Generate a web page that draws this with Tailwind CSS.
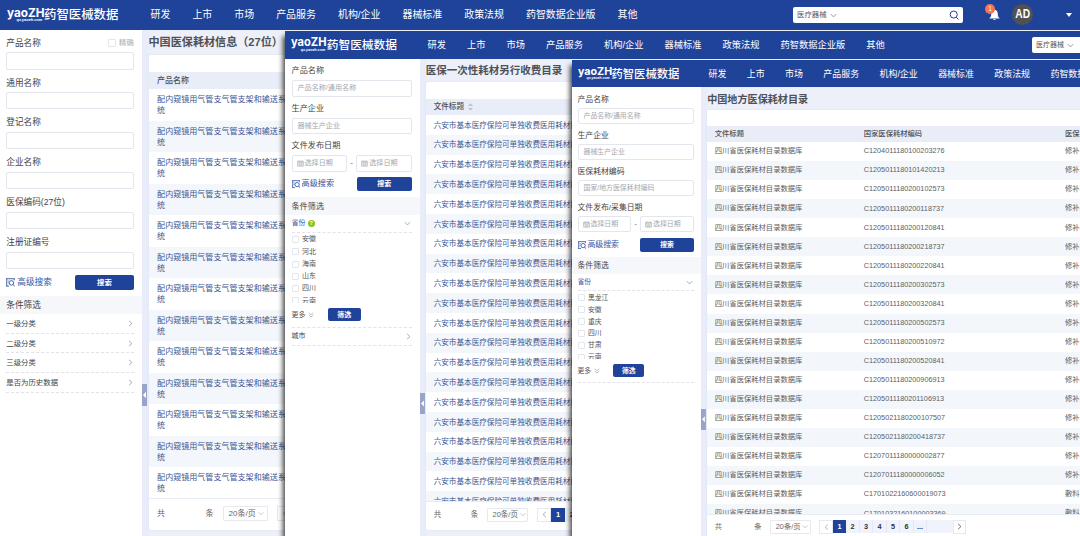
<!DOCTYPE html>
<html lang="zh-CN">
<head>
    <meta charset="UTF-8">
    <meta name="viewport" content="width=device-width, initial-scale=1.0">
    <title>药智医械数据</title>
    <script src="https://cdn.jsdelivr.net/npm/@tailwindcss/browser@4"></script>
</head>
<body class="relative w-[1080px] h-[536px] overflow-hidden bg-[#e9edf9] font-['Liberation_Sans','Noto_Sans_CJK_SC',sans-serif] text-[#4d5158] whitespace-nowrap">

    <svg class="hidden">
        <symbol id="adv" viewBox="0 0 10 10" fill="none" stroke="currentColor">
            <path d="M0 .8H9.8M.8 1V9M0 9H3.5M2 3.3H3M2 5.5H2.8M9.2 1V2.6"/><circle cx="6" cy="5.4" r="2.5"/><path d="M7.8 7.2L9.8 9.5"/>
        </symbol>
        <symbol id="right" viewBox="0 0 6 8" fill="none" stroke="currentColor"><path d="M1.3 .8L4.7 4L1.3 7.2"/></symbol>
        <symbol id="left" viewBox="0 0 6 8" fill="none" stroke="currentColor"><path d="M4.7 .8L1.3 4L4.7 7.2"/></symbol>
        <symbol id="down" viewBox="0 0 8 6" fill="none" stroke="currentColor"><path d="M.8 1.3L4 4.7L7.2 1.3"/></symbol>
        <symbol id="more" viewBox="0 0 8 8" fill="none" stroke="currentColor"><path d="M1 1L4 3.6L7 1M1 4L4 6.6L7 4"/></symbol>
        <symbol id="cal" viewBox="0 0 8 8" fill="none" stroke="currentColor" stroke-width=".8"><path d="M.8 1.5H7.2V7H.8ZM.8 3.2H7.2M2.4 .5V2M5.6 .5V2M2 4.6H6M2 5.8H6"/></symbol>
        <symbol id="handle" viewBox="0 0 5 22"><path d="M4 7.8V14.2L1 11Z" fill="#fff"/></symbol>
    </svg>

    <!-- Window 1 -->
    <section class="absolute left-0 top-0 w-[1080px] h-[536px] flex flex-col overflow-hidden">
        <header class="h-[29.5px] shrink-0 bg-[#1f4399] text-white flex items-center pl-[6.5px]">
            <div class="w-[37.5px] h-full shrink-0 pt-[6.5px]">
                <b class="block text-[12px] leading-[11px] origin-left scale-x-[.98] font-[Inter]">yaoZH</b>
                <i class="block ml-[10px] text-[3.9px] leading-[4px] font-bold">qx.yaozh.com</i>
            </div>
            <b class="w-[106.5px] shrink-0 pt-[1px] text-[12.4px] font-medium">药智医械数据</b>
            <nav class="flex gap-[22px] pt-[1.5px] text-[9.95px] w-[642.5px] shrink-0">
                <a>研发</a><a>上市</a><a>市场</a><a>产品服务</a><a>机构/企业</a><a>器械标准</a><a>政策法规</a><a>药智数据企业版</a><a>其他</a>
            </nav>
            <div class="w-[170px] h-4 shrink-0 bg-white rounded-[2px] flex items-center px-1 pt-[.5px] text-[7.4px] text-[#555]">
                医疗器械<svg class="w-[7px] h-[5px] ml-[3px] text-[#888]"><use href="#down"/></svg>
                <svg class="w-[10px] h-[10px] ml-auto" viewBox="0 0 11 11" fill="none" stroke="#1f4399" stroke-width="1.1"><circle cx="5.2" cy="5" r="3.9"/><path d="M8 8L10.4 10.4"/></svg>
            </div>
            <div class="relative w-[11px] h-[12px] ml-[26px] mt-[1px] shrink-0">
                <svg class="w-[11px] h-[12px]" viewBox="0 0 11 12" fill="#fff"><path d="M5.5 .5C8 1 8.8 3 8.8 5.5C8.8 7.4 9.5 8.3 10.5 9V9.6H.5V9C1.5 8.3 2.2 7.4 2.2 5.5C2.2 3 3 1 5.5 .5ZM4 10.2H7Q5.5 12 4 10.2Z"/></svg>
                <span class="absolute left-[-4px] top-[-5px] size-[10px] rounded-full bg-[#f7744c] text-[6.5px] leading-[10px] text-center">1</span>
            </div>
            <div class="size-[21px] ml-[12px] mt-[-1px] shrink-0 rounded-full bg-[#505153] flex items-center justify-center"><b class="text-[12px] scale-x-[.85]">AD</b></div>
            <svg class="w-[6px] h-[4px] ml-[33px]" viewBox="0 0 6 4"><path d="M0 0H6L3 4Z" fill="#fff"/></svg>
        </header>
        <div class="flex flex-1 min-h-0">
            <aside class="w-[142px] shrink-0 bg-white pt-[3.2px]">
                <form class="pl-[6.3px] w-[133.7px] text-[8.65px] text-[#444]">
                    <div class="h-[39.85px]">
                        <label class="flex h-[19.6px] pt-[1.5px] items-center">产品名称<span class="ml-auto flex items-center gap-[3.5px] text-[7.3px] font-medium text-[#b6b9bf]"><i class="size-[8px] border border-[#e3e6ec] rounded-[1px]"></i>精确</span></label>
                        <div class="h-[17.3px] border border-[#e3e6ec] rounded-[2px]"></div>
                    </div>
                    <div class="h-[39.85px]"><label class="flex h-[19.6px] pt-[1.5px] items-center">通用名称</label><div class="h-[17.3px] border border-[#e3e6ec] rounded-[2px]"></div></div>
                    <div class="h-[39.85px]"><label class="flex h-[19.6px] pt-[1.5px] items-center">登记名称</label><div class="h-[17.3px] border border-[#e3e6ec] rounded-[2px]"></div></div>
                    <div class="h-[39.85px]"><label class="flex h-[19.6px] pt-[1.5px] items-center">企业名称</label><div class="h-[17.3px] border border-[#e3e6ec] rounded-[2px]"></div></div>
                    <div class="h-[39.85px]"><label class="flex h-[19.6px] pt-[1.5px] items-center">医保编码(27位)</label><div class="h-[17.3px] border border-[#e3e6ec] rounded-[2px]"></div></div>
                    <div class="h-[39.85px]"><label class="flex h-[19.6px] pt-[1.5px] items-center">注册证编号</label><div class="h-[17.3px] border border-[#e3e6ec] rounded-[2px]"></div></div>
                    <div class="h-[21px] flex items-center text-[#34559f]">
                        <svg class="size-[9px] mr-[2px]"><use href="#adv"/></svg>高级搜索
                        <button class="ml-auto w-[58.5px] h-[14.5px] rounded-[2px] bg-[#1f4399] text-white text-[7.4px] font-bold">搜索</button>
                    </div>
                </form>
                <h3 class="mt-[3.2px] h-[18.3px] pt-[1px] flex items-center pl-[6.3px] bg-[#f5f7fb] text-[8.65px] text-[#444]">条件筛选</h3>
                <ul class="ml-[6.3px] w-[127.4px] text-[7.4px] text-[#444]">
                    <li class="h-[19.6px] flex items-center justify-between pr-[1px] border-b border-dashed border-[#e1e3e8]">一级分类<svg class="w-[5px] h-[7px] text-[#999]"><use href="#right"/></svg></li>
                    <li class="h-[19.6px] flex items-center justify-between pr-[1px] border-b border-dashed border-[#e1e3e8]">二级分类<svg class="w-[5px] h-[7px] text-[#999]"><use href="#right"/></svg></li>
                    <li class="h-[19.6px] flex items-center justify-between pr-[1px] border-b border-dashed border-[#e1e3e8]">三级分类<svg class="w-[5px] h-[7px] text-[#999]"><use href="#right"/></svg></li>
                    <li class="h-[19.6px] flex items-center justify-between pr-[1px] border-b border-dashed border-[#e1e3e8]">是否为历史数据<svg class="w-[5px] h-[7px] text-[#999]"><use href="#right"/></svg></li>
                </ul>
            </aside>
            <div class="w-[6.5px] shrink-0 pt-[354.5px]"><svg class="w-[5px] h-[22px] bg-[#98a5c9]"><use href="#handle"/></svg></div>
            <main class="flex-1 min-w-0 bg-[#edf0f9]">
                <h2 class="h-[25.5px] pt-[1px] flex items-center text-[11.1px] font-bold">中国医保耗材信息（27位）</h2>
                <div class="h-[475px] bg-white rounded-[2px] pt-[17px] flex flex-col shadow-[0_0_2px_#d5dcf3]">
                    <div class="h-[17px] shrink-0 bg-[#e9edf7] flex items-center pl-[8.6px] text-[8px] font-medium">产品名称</div>
                    <div id="list1" class="h-[410px] shrink-0 overflow-hidden border-b border-[#e8ebf2] text-[8.05px] leading-[11.2px] text-[#3d5590]"></div>
                    <div class="h-[29px] flex items-center pl-[8.6px] text-[8px] text-[#666]">
                        <span class="w-[48.5px]">共</span><span class="w-[17px]">条</span>
                        <span class="w-[45px] h-[15px] border border-[#e6e9f0] rounded-[1px] flex items-center pl-[5px]">20条/页<svg class="w-[6px] h-[5px] ml-[2px] text-[#bbb]"><use href="#down"/></svg></span>
                        <span class="w-[15px] h-[15px] ml-[9px] border border-[#e6e9f0] flex items-center justify-center"><svg class="w-[5px] h-[7px] text-[#999]"><use href="#left"/></svg></span>
                    </div>
                </div>
            </main>
        </div>
    </section>

    <!-- Window 2 -->
    <section class="absolute left-[285px] top-[31px] w-[795px] h-[505px] flex flex-col overflow-hidden bg-[#e9edf9] shadow-[-2px_5px_5px_rgba(0,0,0,.75)]">
        <header class="h-[28px] shrink-0 bg-[#1f4399] text-white flex items-center pl-[6.3px]">
            <div class="w-[35.5px] h-full shrink-0 pt-[6px]">
                <b class="block text-[11.3px] leading-[10.5px] origin-left scale-x-[.98] font-[Inter]">yaoZH</b>
                <i class="block ml-[9.5px] text-[3.7px] leading-[4px] font-bold">qx.yaozh.com</i>
            </div>
            <b class="w-[100.7px] shrink-0 text-[11.7px] font-medium">药智医械数据</b>
            <nav class="flex gap-[21px] pt-[1px] text-[9.25px] w-[605px] shrink-0">
                <a>研发</a><a>上市</a><a>市场</a><a>产品服务</a><a>机构/企业</a><a>器械标准</a><a>政策法规</a><a>药智数据企业版</a><a>其他</a>
            </nav>
            <div class="w-[160px] h-[15.5px] shrink-0 bg-white rounded-[2px] flex items-center pl-[3.5px] text-[7px] text-[#555]">
                医疗器械<svg class="w-[7px] h-[5px] ml-[3px] text-[#888]"><use href="#down"/></svg>
            </div>
        </header>
        <div class="flex flex-1 min-h-0">
            <aside class="w-[134.5px] shrink-0 bg-white pt-[2.7px]">
                <form class="pl-[6.5px] w-[126.8px] text-[8.15px] text-[#444]">
                    <div class="h-[37.4px]"><label class="flex h-[18.6px] pt-[1px] items-center">产品名称</label><div class="h-[16.4px] border border-[#e3e6ec] rounded-[2px] flex items-center pl-[5px] text-[7.1px] text-[#a5a8ae]">产品名称/通用名称</div></div>
                    <div class="h-[37.4px]"><label class="flex h-[18.6px] pt-[1px] items-center">生产企业</label><div class="h-[16.4px] border border-[#e3e6ec] rounded-[2px] flex items-center pl-[5px] text-[7.1px] text-[#a5a8ae]">器械生产企业</div></div>
                    <div class="h-[37.4px]">
                        <label class="flex h-[18.6px] pt-[1px] items-center">文件发布日期</label>
                        <div class="flex justify-between items-center text-[7.1px] text-[#a5a8ae]">
                            <span class="w-[55.5px] h-[16.6px] border border-[#e3e6ec] rounded-[2px] flex items-center pl-[4px]"><svg class="size-[7px] mr-[1px]"><use href="#cal"/></svg>选择日期</span>
                            <span class="text-[#555]">-</span>
                            <span class="w-[55.5px] h-[16.6px] border border-[#e3e6ec] rounded-[2px] flex items-center pl-[4px]"><svg class="size-[7px] mr-[1px]"><use href="#cal"/></svg>选择日期</span>
                        </div>
                    </div>
                    <div class="h-[20.8px] flex items-center text-[#34559f]">
                        <svg class="size-[8.5px] mr-[1.5px]"><use href="#adv"/></svg>高级搜索
                        <button class="ml-auto w-[55.3px] h-[14px] rounded-[2px] bg-[#1f4399] text-white text-[7px] font-bold">搜索</button>
                    </div>
                </form>
                <h3 class="mt-[2.8px] h-[17.5px] pt-[1px] flex items-center pl-[6.5px] bg-[#f5f7fb] text-[8.15px] text-[#444]">条件筛选</h3>
                <div class="ml-[6.5px] w-[120.3px] text-[7px] text-[#555]">
                    <div class="h-[17.6px] flex items-center border-b border-dashed border-[#e1e3e8] text-[#34559f]">省份<i class="ml-[2.5px] size-[6.5px] rounded-full bg-[#8bc21f] text-white text-[5px] leading-[6.5px] text-center not-italic font-bold">?</i><svg class="ml-auto mr-[1px] w-[7px] h-[5px] text-[#8a9cc8]"><use href="#down"/></svg></div>
                    <div class="h-[70.6px] pt-[1px] overflow-hidden" data-checks="安徽,河北,海南,山东,四川,云南" data-step="12.25"></div>
                    <div class="h-[24.6px] flex items-center border-b border-dashed border-[#e1e3e8]">更多<svg class="size-[6px] ml-[2.5px] text-[#aaa]"><use href="#more"/></svg><button class="ml-[14px] w-[32.5px] h-[13px] rounded-[2px] bg-[#1f4399] text-white text-[7px] font-bold">筛选</button></div>
                    <div class="h-[18.3px] flex items-center justify-between pr-[1px] border-b border-dashed border-[#e1e3e8] text-[#444]">城市<svg class="w-[5px] h-[7px] text-[#999]"><use href="#right"/></svg></div>
                </div>
            </aside>
            <div class="w-[6.2px] shrink-0 pt-[334px]"><svg class="w-[5px] h-[21px] bg-[#98a5c9]"><use href="#handle"/></svg></div>
            <main class="flex-1 min-w-0 bg-[#edf0f9]">
                <h2 class="h-[23.2px] pt-[1px] flex items-center text-[10.5px] font-bold">医保一次性耗材另行收费目录</h2>
                <div class="h-[448px] bg-white rounded-[2px] pt-[16.5px] flex flex-col shadow-[0_0_2px_#d5dcf3]">
                    <div class="h-[16.3px] shrink-0 bg-[#e9edf7] flex items-center pl-[8px] text-[7.6px] font-medium">文件标题<svg class="w-[5px] h-[8px] ml-[4px]" viewBox="0 0 5 8" fill="#bcc2cf"><path d="M0 3L2.5 .3L5 3ZM0 5L2.5 7.7L5 5Z"/></svg></div>
                    <div id="list2" class="h-[387px] shrink-0 overflow-hidden border-b border-[#e8ebf2] text-[7.6px] text-[#3d5590]"></div>
                    <div class="h-[26px] flex items-center pl-[8px] text-[7.5px] text-[#666]">
                        <span class="w-[37px]">共</span><span class="w-[16.3px]">条</span>
                        <span class="w-[41.5px] h-[14px] border border-[#e6e9f0] rounded-[1px] flex items-center pl-[4.5px]">20条/页<svg class="w-[6px] h-[5px] ml-[2px] text-[#bbb]"><use href="#down"/></svg></span>
                        <span class="w-[14px] h-[14px] ml-[9px] border border-[#e6e9f0] flex items-center justify-center"><svg class="w-[5px] h-[7px] text-[#999]"><use href="#left"/></svg></span>
                        <b class="w-[13.3px] h-[13.3px] leading-[13.3px] text-center bg-[#1f4399] text-white">1</b>
                        <b class="w-[14px] h-[13.3px] leading-[13.3px] text-center bg-[#f0f3fb] text-[#333]">2</b>
                    </div>
                </div>
            </main>
        </div>
    </section>

    <!-- Window 3 -->
    <section class="absolute left-[572px] top-[60.3px] w-[508px] h-[476px] flex flex-col overflow-hidden bg-[#e9edf9] shadow-[-2px_5px_5px_rgba(0,0,0,.75)]">
        <header class="h-[27.2px] shrink-0 bg-[#1f4399] text-white flex items-center pl-[5.5px]">
            <div class="w-[34px] h-full shrink-0 pt-[5.7px]">
                <b class="block text-[10.9px] leading-[10.5px] origin-left scale-x-[.98] font-[Inter]">yaoZH</b>
                <i class="block ml-[9px] text-[3.5px] leading-[4px] font-bold">qx.yaozh.com</i>
            </div>
            <b class="w-[97px] shrink-0 pt-[1px] text-[11.3px] font-medium">药智医械数据</b>
            <nav class="flex gap-[20.4px] pt-[1px] text-[8.95px] shrink-0">
                <a>研发</a><a>上市</a><a>市场</a><a>产品服务</a><a>机构/企业</a><a>器械标准</a><a>政策法规</a><a>药智数据企业版</a>
            </nav>
        </header>
        <div class="flex flex-1 min-h-0">
            <aside class="w-[129px] shrink-0 bg-white pt-[2.8px]">
                <form class="pl-[5.5px] w-[121.7px] text-[7.85px] text-[#444]">
                    <div class="h-[36.1px]"><label class="flex h-[17.9px] pt-[1px] items-center">产品名称</label><div class="h-[15.7px] border border-[#e3e6ec] rounded-[2px] flex items-center pl-[5px] text-[6.9px] text-[#a5a8ae]">产品名称/通用名称</div></div>
                    <div class="h-[36.1px]"><label class="flex h-[17.9px] pt-[1px] items-center">生产企业</label><div class="h-[15.7px] border border-[#e3e6ec] rounded-[2px] flex items-center pl-[5px] text-[6.9px] text-[#a5a8ae]">器械生产企业</div></div>
                    <div class="h-[36.1px]"><label class="flex h-[17.9px] pt-[1px] items-center">医保耗材编码</label><div class="h-[15.7px] border border-[#e3e6ec] rounded-[2px] flex items-center pl-[5px] text-[6.9px] text-[#a5a8ae]">国家/地方医保耗材编码</div></div>
                    <div class="h-[36.1px]">
                        <label class="flex h-[17.9px] pt-[1px] items-center">文件发布/采集日期</label>
                        <div class="flex justify-between items-center text-[6.9px] text-[#a5a8ae]">
                            <span class="w-[53.6px] h-[15.9px] border border-[#e3e6ec] rounded-[2px] flex items-center pl-[4px]"><svg class="size-[7px] mr-[1px]"><use href="#cal"/></svg>选择日期</span>
                            <span class="text-[#555]">-</span>
                            <span class="w-[53.6px] h-[15.9px] border border-[#e3e6ec] rounded-[2px] flex items-center pl-[4px]"><svg class="size-[7px] mr-[1px]"><use href="#cal"/></svg>选择日期</span>
                        </div>
                    </div>
                    <div class="h-[20.4px] flex items-center text-[#34559f]">
                        <svg class="size-[8.5px] mr-[1.5px]"><use href="#adv"/></svg>高级搜索
                        <button class="ml-auto w-[53.5px] h-[13.7px] rounded-[2px] bg-[#1f4399] text-white text-[6.8px] font-bold">搜索</button>
                    </div>
                </form>
                <h3 class="mt-[2.2px] h-[16.7px] pt-[1px] flex items-center pl-[5.5px] bg-[#f5f7fb] text-[7.85px] text-[#444]">条件筛选</h3>
                <div class="ml-[5.5px] w-[116.2px] text-[6.8px] text-[#555]">
                    <div class="h-[17.4px] flex items-center justify-between pr-[1px] border-b border-dashed border-[#e1e3e8] text-[#34559f]">省份<svg class="w-[7px] h-[5px] text-[#8a9cc8]"><use href="#down"/></svg></div>
                    <div class="h-[67.8px] pt-[.6px] overflow-hidden" data-checks="黑龙江,安徽,重庆,四川,甘肃,云南" data-step="11.9"></div>
                    <div class="h-[24.3px] flex items-center border-b border-dashed border-[#e1e3e8]">更多<svg class="size-[6px] ml-[2.5px] text-[#aaa]"><use href="#more"/></svg><button class="ml-[13.5px] w-[31.2px] h-[12.7px] rounded-[2px] bg-[#1f4399] text-white text-[6.8px] font-bold">筛选</button></div>
                </div>
            </aside>
            <div class="w-[6.2px] shrink-0 pt-[322px]"><svg class="w-[5px] h-[20.5px] bg-[#98a5c9]"><use href="#handle"/></svg></div>
            <main class="flex-1 min-w-0 bg-[#edf0f9]">
                <h2 class="h-[22.2px] pt-[1.5px] flex items-center text-[10.1px] font-bold">中国地方医保耗材目录</h2>
                <div class="h-[440px] bg-white pt-[16.3px] flex flex-col shadow-[0_0_2px_#d5dcf3]">
                    <div class="h-[16px] shrink-0 bg-[#e9edf7] flex items-center pl-[7.6px] text-[7.3px] font-medium"><span class="w-[149px] shrink-0">文件标题</span><span class="w-[201.3px] shrink-0">国家医保耗材编码</span><span>医保通用名</span></div>
                    <div id="list3" class="h-[373px] shrink-0 overflow-hidden border-b border-[#e8ebf2] text-[7.3px] text-[#5b5e63]"></div>
                    <div class="h-[24px] shrink-0 flex items-center pl-[7.6px] text-[7.3px] text-[#666]">
                        <span class="w-[39.5px]">共</span><span class="w-[16px]">条</span>
                        <span class="w-[40.5px] h-[13.5px] border border-[#e6e9f0] rounded-[1px] flex items-center pl-[4.5px]">20条/页<svg class="w-[6px] h-[5px] ml-[1.5px] text-[#bbb]"><use href="#down"/></svg></span>
                        <span class="w-[13.5px] h-[13.5px] ml-[8.5px] border border-[#e6e9f0] flex items-center justify-center"><svg class="w-[5px] h-[6.5px] text-[#aaa]"><use href="#left"/></svg></span>
                        <div class="flex text-center leading-[13px] font-bold text-[#333]">
                            <b class="w-[13.5px] h-[13px] bg-[#1f4399] text-white">1</b>
                            <span class="w-[13.5px] bg-[#f0f3fb] border-r border-[#e6e9f3]">2</span>
                            <span class="w-[13.5px] bg-[#f0f3fb] border-r border-[#e6e9f3]">3</span>
                            <span class="w-[13.5px] bg-[#f0f3fb] border-r border-[#e6e9f3]">4</span>
                            <span class="w-[13.5px] bg-[#f0f3fb] border-r border-[#e6e9f3]">5</span>
                            <span class="w-[13.5px] bg-[#f0f3fb] border-r border-[#e6e9f3]">6</span>
                            <span class="w-[13.5px] bg-[#f0f3fb] border-r border-[#e6e9f3]">...</span>
                            <span class="w-[25.5px] bg-[#f0f3fb]"></span>
                        </div>
                        <span class="w-[13.5px] h-[13.5px] border border-[#e6e9f0] flex items-center justify-center"><svg class="w-[5px] h-[7px] text-[#555]"><use href="#right"/></svg></span>
                    </div>
                </div>
            </main>
        </div>
    </section>

    <script>
        const codes = ['C1204011180100203276', 'C1205011180101420213', 'C1205011180200102573', 'C1205011180200118737',
            'C1205011180200120841', 'C1205011180200218737', 'C1205011180200220841', 'C1205011180200302573',
            'C1205011180200320841', 'C1205011180200502573', 'C1205011180200510972', 'C1205011180200520841',
            'C1205011180200906913', 'C1205011180201106913', 'C1205021180200107507', 'C1205021180200418737',
            'C1207011180000002877', 'C1207011180000006052', 'C1701022160600019073', 'C1701032160100003369'];

        for (let i = 0; i < 13; i++) {
            list1.innerHTML += `<div class="h-[31.5px] pt-[1px] flex items-center pl-[8.6px] odd:bg-white even:bg-[#f3f7fb]"><p>配内窥镜用气管支气管支架和输送系<br>统</p></div>`;
        }
        for (let i = 0; i < 20; i++) {
            list2.innerHTML += `<div class="h-[19.8px] pt-[1px] flex items-center pl-[8px] odd:bg-white even:bg-[#f3f7fb]">六安市基本医疗保险可单独收费医用耗材目录</div>`;
        }
        codes.forEach((code, i) => {
            list3.innerHTML += `<div class="h-[19.07px] pt-[.5px] flex items-center pl-[7.6px] odd:bg-white even:bg-[#f3f7fb]"><span class="w-[149px] shrink-0">四川省医保耗材目录数据库</span><span class="w-[201.3px] shrink-0 text-[7.25px]">${code}</span><span>${i < 18 ? '修补材料' : '敷料'}</span></div>`;
        });
        document.querySelectorAll('[data-checks]').forEach(el => {
            el.innerHTML = el.dataset.checks.split(',').map(name =>
                `<label class="flex items-center gap-[3.5px]" style="height:${el.dataset.step}px"><i class="size-[7px] border border-[#e3e6ec] rounded-[1px]"></i>${name}</label>`).join('');
        });
    </script>
</body>
</html>
